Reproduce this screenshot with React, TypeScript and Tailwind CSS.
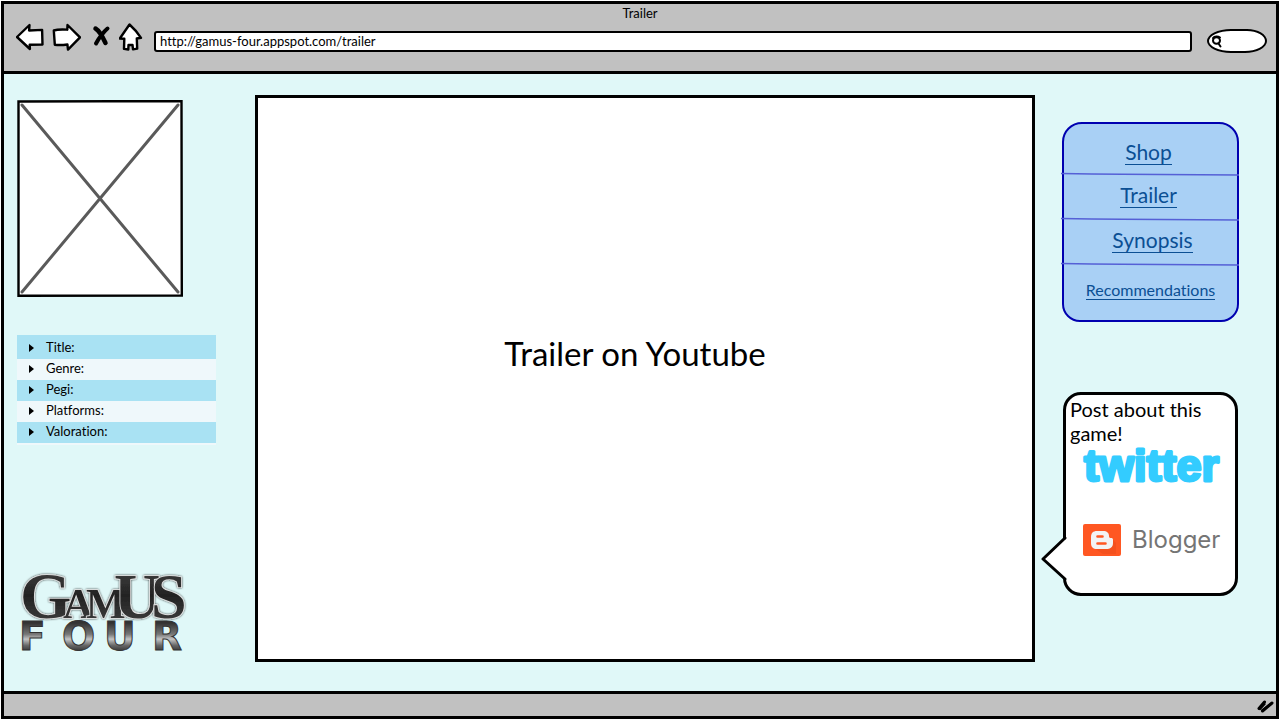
import type { ReactNode } from "react";

const details = ["Title:", "Genre:", "Pegi:", "Platforms:", "Valoration:"];

function ToolButton({ label, children }: { label: string; children: ReactNode }) {
  return (
    <button type="button" aria-label={label} className="shrink-0">
      {children}
    </button>
  );
}

function BrowserBar() {
  return (
    <header className="border-b-[3px] border-black bg-[#c1c1c1] pb-[18px]">
      <h1 className="pt-px text-center text-[13px] leading-4">Trailer</h1>
      <div className="flex items-center pr-[9px] pl-3">
        <div className="mr-[11px] flex items-center gap-2">
          <ToolButton label="Back">
            <svg width="28" height="28" viewBox="0 0 28 28" fill="#fff" stroke="#000" strokeWidth="2.4" strokeLinejoin="round">
              <path d="M1 14 13.500 2l-.4 5.500 13-.6.4 14.600-12.800.2.2 4.300z" />
            </svg>
          </ToolButton>
          <ToolButton label="Forward">
            <svg width="29" height="28" viewBox="0 0 29 28" fill="#fff" stroke="#000" strokeWidth="2.4" strokeLinejoin="round">
              <path d="M1.800 7.500c4-1.300 9-1 13.500-.8l.2-4.700L28 14.300 16 26.600l-.6-5.100c-4.400.6-9 .8-12.600.200z" />
            </svg>
          </ToolButton>
          <ToolButton label="Stop">
            <svg width="22" height="28" viewBox="0 0 22 28" fill="none" stroke="#000" strokeLinecap="round">
              <path d="M6.500 5.500c3.500 2 7 8 10 14.500" strokeWidth="4.500" />
              <path d="M18.500 5.500c-2.500 2-8.500 9-11.500 15" strokeWidth="4" />
            </svg>
          </ToolButton>
          <ToolButton label="Home">
            <svg width="24" height="28" viewBox="0 0 24 28" fill="#fff" stroke="#000" strokeWidth="2.400" strokeLinejoin="round" strokeLinecap="round">
              <path d="M10.500 1.500 .8 15.500l4.500.2-.3 10.200 4.300.6.200-4.500 4-.1.500 4.500 4.200-.8-.4-10.100 4.200-.7C18.500 9.500 15 5.500 10.500 1.500z" />
            </svg>
          </ToolButton>
        </div>
        <input
          aria-label="Address"
          type="text"
          defaultValue="http://gamus-four.appspot.com/trailer"
          className="mt-2 h-[21px] min-w-0 flex-1 rounded-[3px] border-2 border-black bg-white px-1 text-[13px] leading-4 outline-none"
        />
        <div className="mt-2 ml-[15px] flex h-6 w-[60px] items-center rounded-[24px_20px_22px_24px/12px] border-2 border-black bg-white pl-0.5">
          <svg width="12" height="14" viewBox="0 0 12 14" fill="none" stroke="#000" strokeWidth="2" strokeLinecap="round">
            <ellipse cx="5.500" cy="6.500" rx="3.500" ry="3.300" />
            <path d="M2 4C3.500 2 7 2 9 3.500M7.500 9.500l2 3" />
          </svg>
          <input aria-label="Search" type="search" className="w-8 bg-transparent text-xs outline-none" />
        </div>
      </div>
    </header>
  );
}

function GamusLogo() {
  return (
    <svg width="166" height="84" viewBox="0 0 166 84" role="img" aria-label="GamUS Four" className="overflow-visible">
      <defs>
        <linearGradient id="ink" x1="0" y1="0" x2="0" y2="1">
          <stop offset="0" stopColor="#4a4a4a" />
          <stop offset="0.5" stopColor="#232323" />
          <stop offset="1" stopColor="#444" />
        </linearGradient>
        <linearGradient id="steel" x1="0" y1="0" x2="0" y2="1">
          <stop offset="0.2" stopColor="#333" />
          <stop offset="0.45" stopColor="#777" />
          <stop offset="0.56" stopColor="#c4c4c4" />
          <stop offset="0.7" stopColor="#666" />
          <stop offset="0.85" stopColor="#2c2c2c" />
        </linearGradient>
        <filter id="glow" x="-10%" y="-10%" width="120%" height="120%">
          <feDropShadow dx="0" dy="0" stdDeviation="1.200" floodColor="#111" floodOpacity="0.8" />
        </filter>
      </defs>
      <text y="80" fill="url(#steel)" stroke="#333" strokeWidth="1" fontFamily="'DejaVu Sans', sans-serif" fontWeight="700" fontSize="39">
        <tspan x="-2">F</tspan>
        <tspan x="41">O</tspan>
        <tspan x="83">U</tspan>
        <tspan x="131">R</tspan>
      </text>
      <g filter="url(#glow)">
        <text y="48" fill="url(#ink)" stroke="#e4e4e4" strokeWidth="1.600" paintOrder="stroke" fontFamily="'Liberation Serif', serif" fontWeight="700">
          <tspan x="-1" fontSize="66">G</tspan>
          <tspan x="42" fontSize="42">A</tspan>
          <tspan x="65" fontSize="42">M</tspan>
          <tspan x="93" fontSize="64">U</tspan>
          <tspan x="130" fontSize="64">S</tspan>
        </text>
      </g>
    </svg>
  );
}

function GameInfo() {
  return (
    <aside className="flex w-[199px] shrink-0 flex-col pt-[26px] pb-[37px]">
      <svg width="166" height="197" viewBox="0 0 166 197" role="img" aria-label="Game cover">
        <path d="M1.500 1.500 164.500 1l.3 194.500-163.300.2z" fill="#fff" stroke="#000" strokeWidth="2.400" />
        <path d="M5 5 161 192M161 5 5 192" stroke="#5a5a5a" strokeWidth="3" strokeLinecap="round" />
      </svg>
      <ul className="mt-[38px] border-b-2 border-[#eff8fb] text-[13px]">
        {details.map((name) => (
          <li
            key={name}
            className="flex h-[21px] items-center gap-3 bg-[#eff8fb] pb-0.5 pl-3 first:h-6 first:pt-0.5 first:pb-0 odd:bg-[#a9e2f3]"
          >
            <svg width="5" height="8" viewBox="0 0 5 8">
              <path d="M0 0 5 4 0 8z" />
            </svg>
            {name}
          </li>
        ))}
      </ul>
      <div className="mt-auto pl-1">
        <GamusLogo />
      </div>
    </aside>
  );
}

function Divider() {
  return (
    <svg className="-mx-0.5 block h-[3px] w-[177px] overflow-visible" viewBox="0 0 177 3" fill="none" stroke="#5560d6" strokeWidth="1.500">
      <path d="M-1 .5Q30 1 60 1.200T177 2" />
    </svg>
  );
}

const link = "border-b border-[#0b4f94] text-[21px] leading-[22px] text-[#0b4f94]";

function SiteNav() {
  return (
    <nav className="flex h-[200px] flex-col items-center rounded-[20px_20px_18px_18px] border-2 border-[#0000b0] bg-[#a9d0f5] text-center">
      <div className="h-[49px] pt-[17px] pr-1"><a href="#shop" className={link}>Shop</a></div>
      <Divider />
      <div className="h-[42px] pt-2 pr-1"><a href="#trailer" className={link}>Trailer</a></div>
      <Divider />
      <div className="h-[42px] pt-2 pl-1"><a href="#synopsis" className={link}>Synopsis</a></div>
      <Divider />
      <div className="pt-3">
        <a href="#recommendations" className="border-b border-[#0b4f94] text-base leading-[18px] text-[#0b4f94]">Recommendations</a>
      </div>
    </nav>
  );
}

function ShareBubble() {
  return (
    <section className="relative mx-px mt-[70px] h-[204px] rounded-[18px] border-[3px] border-black bg-white">
      <svg className="absolute top-[141px] -left-[25px] h-[48px] w-[27px]" viewBox="0 0 27 48" fill="#fff">
        <path d="M27 1 2 23l25 22z" />
        <path d="M24 2 2 23l22 20" stroke="#000" strokeWidth="3" strokeLinejoin="round" strokeLinecap="round" />
      </svg>
      <p className="pt-0.5 pl-1 text-xl leading-6">Post about this game!</p>
      <a href="#twitter" aria-label="twitter" className="ml-[17px] block h-9">
        <svg width="141" height="38" viewBox="0 0 141 38" className="overflow-visible">
          <text
            x="1"
            y="36"
            fontFamily="'Liberation Sans', sans-serif"
            fontWeight="700"
            fontSize="45"
            fill="#3cf"
            stroke="#3cf"
            strokeWidth="3"
            strokeLinejoin="round"
          >
            twitter
          </text>
        </svg>
      </a>
      <a href="#blogger" className="mt-[43px] ml-[17px] flex items-center gap-[11px] font-['Inter',sans-serif] text-2xl leading-8 text-[#757575]">
        <svg width="38" height="32" viewBox="0 0 38 32">
          <rect width="38" height="32" rx="2" fill="#ff5722" />
          <path d="m29 15 4 4v11H20l-9-6z" fill="#f4511e" />
          <path d="M14 7h6c4 0 6 2 6 5 0 1.500.5 2 2 2s2 .6 2 2v3c0 4-2.500 6-7 6h-9c-4 0-6-2-6-6v-6c0-4 2-6 6-6z" fill="#f3f3f3" />
          <path d="M14.500 12.500h5M14.500 19.500h8" stroke="#ff5722" strokeWidth="2.600" strokeLinecap="round" />
        </svg>
        Blogger
      </a>
    </section>
  );
}

export default function App() {
  return (
    <div className="flex min-h-screen flex-col bg-white p-px font-['Lato',sans-serif] text-black [font-variant-ligatures:none]">
      <div className="flex flex-1 flex-col border-[3px] border-black bg-[#e0f8f8]">
        <BrowserBar />
        <main className="flex flex-1 pr-[37px] pl-[13px]">
          <GameInfo />
          <section className="mt-[21px] mr-[27px] mb-[29px] ml-[39px] flex flex-1 items-center justify-center border-[3px] border-black bg-white">
            <h2 className="pr-5 pb-13 text-[33px] leading-10">Trailer on Youtube</h2>
          </section>
          <div className="w-[177px] shrink-0 pt-12">
            <SiteNav />
            <ShareBubble />
          </div>
        </main>
        <footer className="flex h-[25px] items-center justify-end border-t-[3px] border-black bg-[#c1c1c1] pr-0.5">
          <svg width="18" height="16" viewBox="0 0 18 16" fill="none" stroke="#000" strokeWidth="3" strokeLinecap="round">
            <path d="M3 11.500 8.500 5M6.500 14 16 6" />
            <path d="M4 12.500 9 7M6 13l8-6" strokeWidth="1.500" />
          </svg>
        </footer>
      </div>
    </div>
  );
}
